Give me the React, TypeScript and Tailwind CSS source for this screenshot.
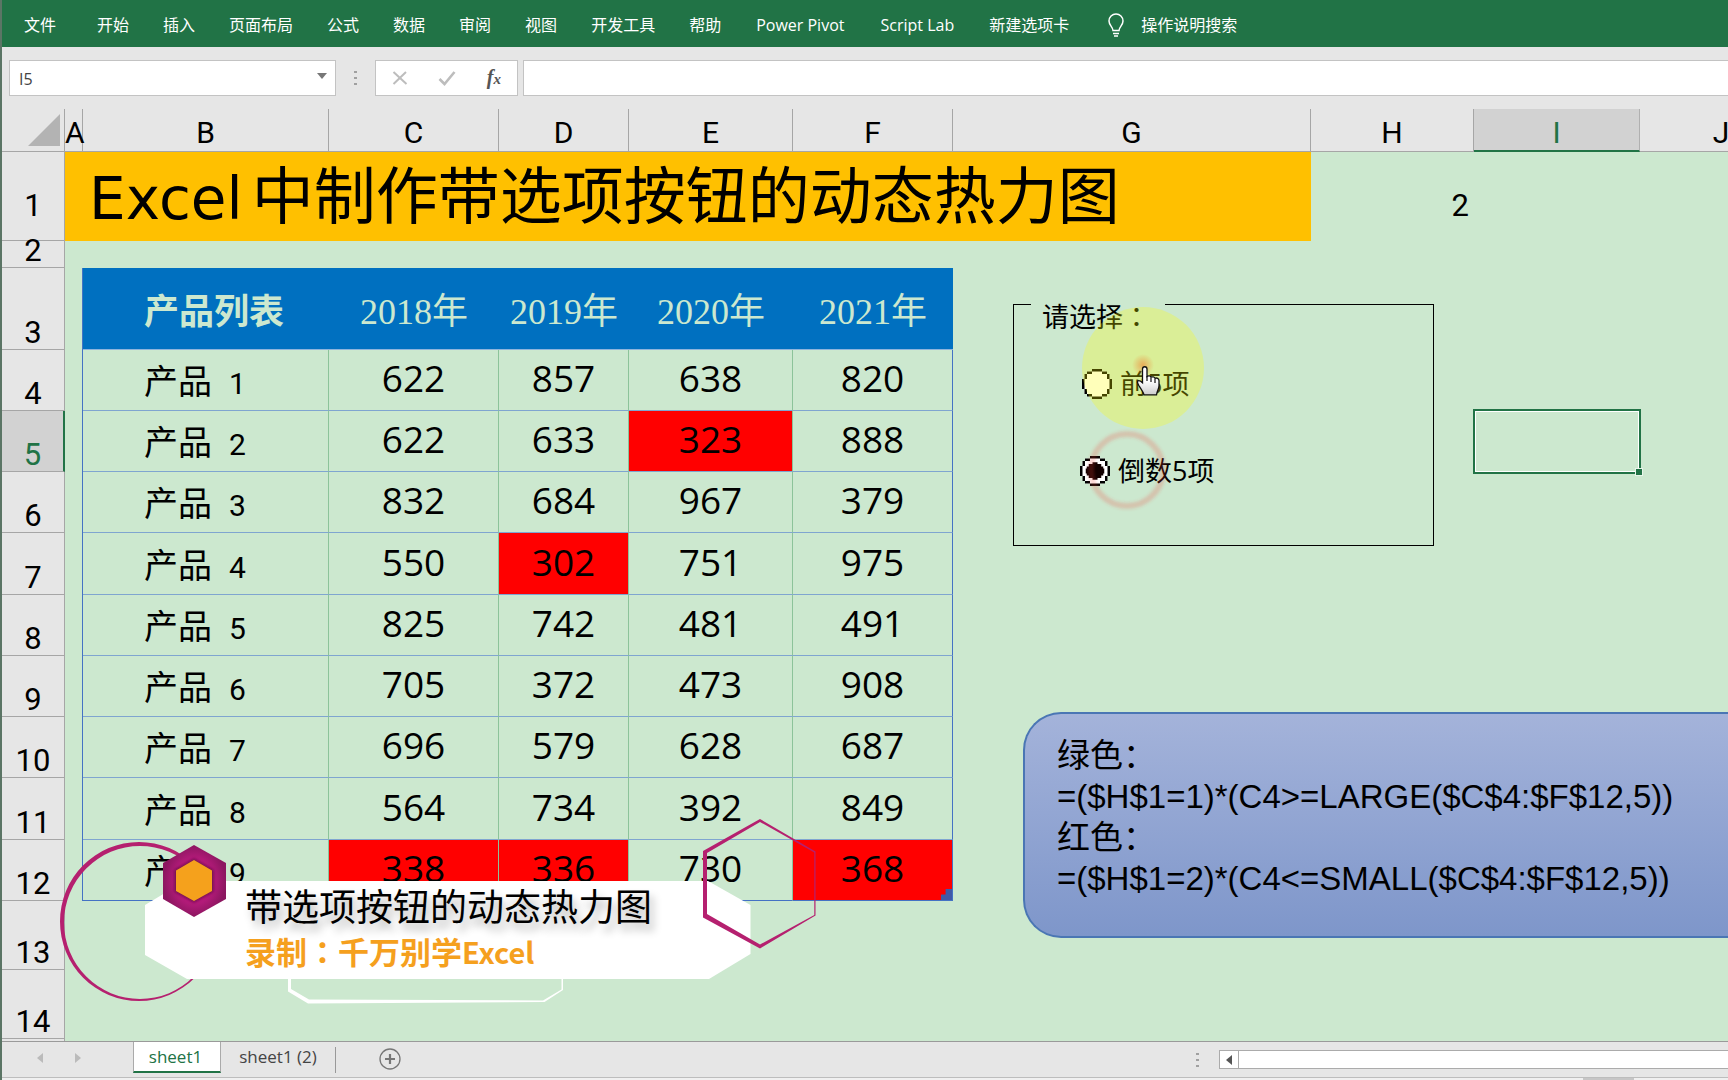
import { useState } from "react"
import clsx from "clsx"

const MENU = ["开始", "插入", "页面布局", "公式", "数据", "审阅", "视图", "开发工具", "帮助", "Power Pivot", "Script Lab", "新建选项卡"]

const COLUMNS = [
  { name: "A", width: "w-[18px]" },
  { name: "B", width: "w-[246px]" },
  { name: "C", width: "w-[170px]" },
  { name: "D", width: "w-[130px]" },
  { name: "E", width: "w-[164px]" },
  { name: "F", width: "w-[160px]" },
  { name: "G", width: "w-[358px]" },
  { name: "H", width: "w-[163px]" },
  { name: "I", width: "w-[166px]" },
  { name: "J", width: "" },
]

const YEARS = ["2018年", "2019年", "2020年", "2021年"]

const PRODUCTS = [
  [622, 857, 638, 820],
  [622, 633, 323, 888],
  [832, 684, 967, 379],
  [550, 302, 751, 975],
  [825, 742, 481, 491],
  [705, 372, 473, 908],
  [696, 579, 628, 687],
  [564, 734, 392, 849],
  [338, 336, 730, 368],
]

const LAST = PRODUCTS.length - 1
const SORTED = PRODUCTS.flat().sort((a, b) => a - b)
const SMALL_5 = SORTED[4]
const LARGE_5 = SORTED[SORTED.length - 5]

const RowHeader = ({ row, active = false, className = "pb-[6px]" }) => (
  <th
    scope="row"
    className={clsx(
      "border-b border-[#a6a6a6] text-center align-bottom font-['Roboto'] text-[31px] leading-[20px] font-normal",
      active ? "border-r-2 border-r-[#217346] bg-[#d2d2d2] text-[#217346]" : "border-r bg-[#e6e6e6] text-black",
      className
    )}
  >
    {row}
  </th>
)

const Ribbon = () => (
  <header className="flex h-[47px] items-center bg-[#217346] pt-[2px] text-[16px] whitespace-nowrap text-white">
    <nav className="flex items-center gap-[34px] pl-[22px]">
      <a href="#file" className="mr-[7px]">文件</a>
      {MENU.map((item) => (
        <a key={item} href="#tab" className={clsx(item.includes(" ") && "px-[1px]")}>{item}</a>
      ))}
    </nav>
    <button className="ml-[38px] flex items-center gap-[16px]">
      <svg viewBox="0 0 18 24" className="h-[24px] w-[18px]" fill="none" stroke="currentColor" strokeWidth="1.5">
        <path d="M6 17.5c0-3.5-4-5-4-9.5a7 7 0 0 1 14 0c0 4.500-4 6-4 9.500z" />
        <path d="M6 20.500h6M7 23h4" />
      </svg>
      操作说明搜索
    </button>
  </header>
)

const FormulaBar = () => (
  <div className="flex h-[62px] gap-[5px] pt-[13px] pl-[7px]">
    <div className="flex h-[36px] w-[327px] items-center border border-[#c3c3c3] bg-white pr-[8px]">
      <input
        aria-label="名称框"
        defaultValue="I5"
        className="min-w-0 flex-1 bg-transparent pt-[1px] pl-[9px] text-[16px] text-[#444] outline-none"
      />
      <svg viewBox="0 0 10 6" className="mb-[4px] h-[6px] w-[10px] fill-[#777]">
        <path d="M0 0h10L5 6z" />
      </svg>
    </div>
    <div className="flex h-[36px] w-[29px] items-center justify-center">
      <svg viewBox="0 0 4 16" className="h-[16px] w-[4px] fill-[#a0a0a0]">
        <path d="M0 1h3v2H0zM0 7h3v2H0zM0 13h3v2H0z" />
      </svg>
    </div>
    <div className="flex h-[36px] w-[143px] items-center justify-between border border-[#c3c3c3] bg-white pr-[16px] pl-[16px]">
      <button aria-label="取消">
        <svg viewBox="0 0 16 16" className="size-[16px]" fill="none" stroke="#bdbdbd" strokeWidth="2">
          <path d="M1.500 2l13 12M14 2L1.500 14" />
        </svg>
      </button>
      <button aria-label="输入">
        <svg viewBox="0 0 18 16" className="h-[16px] w-[18px]" fill="none" stroke="#bdbdbd" strokeWidth="2.600">
          <path d="M1.500 9l5 5L16.500 2" />
        </svg>
      </button>
      <button aria-label="插入函数" className="pb-[2px] font-['Liberation_Serif'] text-[20px] leading-none font-bold text-[#555] italic">
        f<span className="text-[15px]">x</span>
      </button>
    </div>
    <input aria-label="编辑栏" className="h-[36px] min-w-0 flex-1 border border-r-0 border-[#c3c3c3] bg-white px-2 outline-none" />
  </div>
)

const RadioDot = ({ checked }) => (
  <svg viewBox="0 0 12 12" className="pointer-events-none absolute inset-0 size-[30px]">
    <path fill="#fff" d="M4 0h4v1h2v1h1v2h1v4h-1v2h-1v1H8v1H4v-1H2v-1H1V8H0V4h1V2h1V1h2z" />
    <path
      fill="#000"
      d="M4 0h4v1H4zM2 1h2v1H2zM8 1h2v1H8zM1 2h1v2H1zM10 2h1v2h-1zM0 4h1v4H0zM11 4h1v4h-1zM1 8h1v2H1zM10 8h1v2h-1zM2 10h2v1H2zM8 10h2v1H8zM4 11h4v1H4z"
    />
    {checked && <path fill="#100" d="M5 2.500h2v.7h1.500v1h.8V5h.4v2h-.4v.8h-.8v1H7v.7H5v-.7H3.500v-1h-.8V7h-.4V5h.4v-.8h.8v-1H5z" />}
  </svg>
)

const OptionBox = ({ mode, onChange }) => {
  const options = [
    { value: 1, label: "前5项", className: "ml-[68px]" },
    { value: 2, label: "倒数5项", className: "ml-[66px]" },
  ]

  return (
    <fieldset className="absolute top-[168px] left-[1011px] h-[269px] w-[421px] border border-black">
      <legend className="ml-[17px] w-[134px] px-[11px] pt-[24px] text-[27px] leading-[30px] whitespace-nowrap">
        请选择<span className="font-['Noto_Sans_CJK_TC']">：</span>
      </legend>
      <div className="mt-[32px] flex flex-col gap-[48px]">
        {options.map((option) => (
          <label key={option.value} className={clsx("flex h-[39px] items-center gap-[8px] text-[27px] leading-[39px]", option.className)}>
            <span className="relative size-[30px]">
              <input
                type="radio"
                name="mode"
                className="block size-[30px] appearance-none"
                checked={mode === option.value}
                onChange={() => onChange(option.value)}
              />
              <RadioDot checked={mode === option.value} />
            </span>
            {option.label}
          </label>
        ))}
      </div>
    </fieldset>
  )
}

// Mouse highlight, click ripple and the hand cursor
const Pointer = () => (
  <svg viewBox="0 0 140 220" className="pointer-events-none absolute top-[190px] left-[1071px] h-[220px] w-[140px]">
    <defs>
      <filter id="soft" x="-50%" y="-50%" width="200%" height="200%">
        <feGaussianBlur stdDeviation="1.500" />
      </filter>
      <radialGradient id="click">
        <stop offset="0" stopColor="#f08030" stopOpacity="0.600" />
        <stop offset="1" stopColor="#f08030" stopOpacity="0" />
      </radialGradient>
      <linearGradient id="hand" x1="0" y1="0" x2="0" y2="1">
        <stop offset="0.500" stopColor="#fff" />
        <stop offset="1" stopColor="#ccc" />
      </linearGradient>
    </defs>
    <circle cx="70" cy="69" r="61" fill="#ff0" fillOpacity="0.270" />
    <circle cx="70" cy="66" r="11" fill="url(#click)" />
    <circle cx="54" cy="171" r="36" fill="none" stroke="#f04030" strokeOpacity="0.220" strokeWidth="6" filter="url(#soft)" />
    <path
      d="M69.500 70c0-3 4.500-3 4.500 0v7.500c1.500-1.200 3.500-.6 4 .8 1.500-1 3.500-.4 4 1 1.800-.8 4 .2 4 2.500v5c0 3-2 5-2.500 9H71c-1-3.500-3-5.500-5-9-1-2-2.500-3.500-1-5 1.500-1 3 .5 4.500 2z"
      fill="url(#hand)"
      stroke="#111"
      strokeWidth="1.300"
    />
    <path d="M74 77v5M78 79v4M82 80v4" stroke="#111" strokeWidth="1.200" />
  </svg>
)

const FormulaNote = () => (
  <div className="absolute top-[603px] right-0 left-[1021px] h-[226px] overflow-hidden rounded-l-[38px] border-2 border-r-0 border-[#4a76b4] bg-linear-to-b from-[#a4b3da] to-[#7e96ca] pt-[21px] pl-[32px] font-['Liberation_Sans','Noto_Sans_CJK_SC',sans-serif] text-[33px] leading-[41px] whitespace-nowrap">
    <p>绿色：</p>
    <p>=($H$1=1)*(C4&gt;=LARGE($C$4:$F$12,5))</p>
    <p>红色：</p>
    <p>=($H$1=2)*(C4&lt;=SMALL($C$4:$F$12,5))</p>
  </div>
)

const Banner = () => (
  <div className="absolute top-[701px] left-[48px] h-[200px] w-[780px]">
    <svg viewBox="50 810 780 200" className="absolute inset-0 h-[200px] w-[780px]">
      <defs>
        <radialGradient id="gem">
          <stop offset="0.500" stopColor="#c01c82" />
          <stop offset="1" stopColor="#8c1660" />
        </radialGradient>
        <filter id="gemShadow" x="-30%" y="-30%" width="160%" height="160%">
          <feGaussianBlur stdDeviation="1.800" />
        </filter>
      </defs>
      <path
        fill="#b5206f"
        fillRule="evenodd"
        d="M60 921.500a79 79.500 0 1 0 158 0a79 79.500 0 1 0-158 0zM64 922.500a76 76.500 0 1 0 152 0a76 76.500 0 1 0-152 0z"
      />
      <path fill="#fff" fillRule="evenodd" d="M288 978v13.500l20 12L544.500 1002l18.500-12V978h-1.500v11.500L543 1000.500l-234-1-18-10.500V978z" />
      <path fill="#fff" d="M145 905l40-24h523l42.500 24v49L709 979H187l-42-24z" />
      <path
        fill="#b5206f"
        fillRule="evenodd"
        d="M760 819l55.500 32.500v64L760 948.500l-57-31v-66.500zM760 822l-53 31v61L760 944.500l54.300-29.500v-62.500z"
      />
      <path fill="url(#gem)" d="M194 845l32 18v36l-32 18-31-18v-36z" />
      <path fill="#6d104a" filter="url(#gemShadow)" d="M194 858.500l19.500 11.500v21.500L194 902.500l-19.500-11V870z" />
      <path fill="#f5a11c" d="M194 860l18 10.500v20.500l-18 10-18-10v-20.500z" />
    </svg>
    <div className="relative pt-[74px] pl-[195px] whitespace-nowrap">
      <p className="text-[37px] leading-[46px] [text-shadow:4px_7px_9px_rgba(0,0,0,0.3)]">带选项按钮的动态热力图</p>
      <p className="text-[31px] leading-[41px] font-bold text-[#f5a01e]">
        录制<span className="font-['Noto_Sans_CJK_TC']">：</span>千万别学<span className="font-['Noto_Sans_CJK_SC'] text-[29px]">Excel</span>
      </p>
    </div>
  </div>
)

const SheetTabs = () => (
  <footer className="border-t border-[#9a9a9a]">
    <div className="flex h-[36px] items-start border-b border-[#bdbdbd] text-[17px] leading-[30px] text-[#444]">
      <div className="flex w-[131px] items-center gap-[32px] pt-[11px] pl-[35px]">
        <svg viewBox="0 0 6 10" className="h-[10px] w-[6px] fill-[#bbb]"><path d="M6 0v10L0 5z" /></svg>
        <svg viewBox="0 0 6 10" className="h-[10px] w-[6px] fill-[#bbb]"><path d="M0 0v10l6-5z" /></svg>
      </div>
      <button className="h-[31px] w-[88px] border-x border-b-2 border-x-[#aaa] border-b-[#217346] bg-white pr-[3px] text-[#217346]">sheet1</button>
      <button className="h-[30px] w-[114px] whitespace-nowrap">sheet1 (2)</button>
      <div className="mt-[5px] h-[26px] w-px bg-[#999]" />
      <button aria-label="新工作表" className="mt-[6px] ml-[43px]">
        <svg viewBox="0 0 22 22" className="size-[22px]" fill="none" stroke="#777">
          <circle cx="11" cy="11" r="10" strokeWidth="1.300" />
          <path d="M11 6v10M6 11h10" strokeWidth="2.200" />
        </svg>
      </button>
      <div className="ml-auto flex w-[532px] items-center pt-[8px]">
        <svg viewBox="0 0 4 16" className="mr-[19px] h-[16px] w-[4px] fill-[#a0a0a0]">
          <path d="M0 1h3v2H0zM0 7h3v2H0zM0 13h3v2H0z" />
        </svg>
        <button aria-label="向左滚动" className="flex h-[19px] w-[20px] items-center justify-center border border-[#ababab] bg-white">
          <svg viewBox="0 0 6 10" className="h-[10px] w-[6px] fill-[#555]"><path d="M6 0v10L0 5z" /></svg>
        </button>
        <div className="h-[19px] flex-1 border-y border-[#ababab] bg-white" />
      </div>
    </div>
    <div className="flex h-[2px] justify-end bg-[#f0f0f0] pr-[94px]">
      <div className="w-[51px] bg-[#c6c6c6]" />
    </div>
  </footer>
)

export default function App() {
  const [mode, setMode] = useState(2)

  const heat = (value) => {
    if (mode === 1 && value >= LARGE_5) return "bg-[#00b050]"
    if (mode === 2 && value <= SMALL_5) return "bg-[#ff0000]"
    return ""
  }

  return (
    <div className="overflow-hidden border-l-2 border-[#5b7565] bg-[#e6e6e6] font-['Open_Sans','Noto_Sans_CJK_SC',sans-serif] text-black">
      <Ribbon />
      <FormulaBar />

      <main className="relative overflow-hidden bg-[#cce8cf]">
        <table className="w-full min-w-[1801px] table-fixed border-separate border-spacing-0">
          <colgroup>
            <col className="w-[63px]" />
            {COLUMNS.map((col) => (
              <col key={col.name} className={col.width} />
            ))}
          </colgroup>
          <thead>
            <tr className="h-[43px] bg-[#e6e6e6] font-['Roboto'] text-[30px] leading-[34px]">
              <td className="border-r border-b border-[#a6a6a6] p-0 align-bottom">
                <svg viewBox="0 0 32 32" className="mr-[4px] mb-[5px] ml-auto size-[32px] fill-[#b3b3b3]"><path d="M32 0v32H0z" /></svg>
              </td>
              {COLUMNS.map((col) => (
                <th
                  key={col.name}
                  scope="col"
                  className={clsx(
                    "border-r p-0 pt-[6px] font-normal",
                    col.name === "I" ? "border-b-2 border-r-[#b0b0b0] border-b-[#217346] bg-[#d2d2d2] text-[#217346]" : "border-b border-[#a6a6a6]"
                  )}
                >
                  {col.name}
                </th>
              ))}
            </tr>
          </thead>
          <tbody>
            <tr className="h-[89px]">
              <RowHeader row={1} className="pb-[24px]" />
              <td colSpan={7} className="bg-[#ffc000] p-0 pl-[24px] text-[62px] leading-[70px] whitespace-nowrap">
                <span className="mr-[9px] font-['DejaVu_Sans'] text-[58px]">Excel</span>中制作带选项按钮的动态热力图
              </td>
              <td className="p-0 pr-[5px] pb-[25px] text-right align-bottom font-['Roboto'] text-[31px] leading-[20px]">{mode}</td>
              <td colSpan={2} />
            </tr>
            <tr className="h-[27px]">
              <RowHeader row={2} />
              <td colSpan={10} />
            </tr>
            <tr className="h-[82px]">
              <RowHeader row={3} />
              <td className="border-r border-[#4472c4]" />
              <th scope="col" className="border-b border-[#8eb4dc] bg-[#0070c0] p-0 pt-[4px] pl-[61px] text-left text-[35px] leading-[40px] text-[#cce8cf]">
                产品列表
              </th>
              {YEARS.map((year) => (
                <th
                  key={year}
                  scope="col"
                  className="border-b border-[#8eb4dc] bg-[#0070c0] p-0 pt-[7px] font-['Liberation_Serif','Noto_Sans_CJK_SC',serif] text-[36px] leading-[40px] font-normal text-[#cce8cf]"
                >
                  {year}
                </th>
              ))}
              <td colSpan={4} />
            </tr>
            {PRODUCTS.map((values, i) => (
              <tr key={i} className={i === 3 || i === 7 ? "h-[62px]" : "h-[61px]"}>
                <RowHeader row={i + 4} active={i === 1} />
                <td className="border-r border-[#4472c4]" />
                <td
                  className={clsx(
                    "border-r border-b border-r-[#8cc39a] p-0 pt-[5px] pl-[61px] text-[34px] leading-[40px]",
                    i === LAST ? "border-b-[#4472c4]" : "border-b-[#7fa5d0]"
                  )}
                >
                  产品&ensp;<span className="font-['Roboto'] text-[30px]">{i + 1}</span>
                </td>
                {values.map((value, j) => (
                  <td
                    key={j}
                    className={clsx(
                      "relative border-r border-b p-0 pb-[4px] text-center text-[37px] leading-[40px]",
                      i === LAST ? "border-b-[#4472c4]" : "border-b-[#7fa5d0]",
                      j === 3 ? "border-r-[#4472c4]" : "border-r-[#8cc39a]",
                      heat(value)
                    )}
                  >
                    {value}
                    {i === LAST && j === 3 && (
                      <svg viewBox="0 0 12 12" className="absolute right-0 bottom-0 size-[11px] fill-[#4159a8]">
                        <path d="M12 0v12H0V6h5V0z" />
                      </svg>
                    )}
                  </td>
                ))}
                <td colSpan={2} />
                <td className="relative p-0">
                  {i === 1 && (
                    <div className="absolute -inset-x-[1px] -inset-y-[2px] border-2 border-[#217346] outline-1 -outline-offset-3 outline-white">
                      <div className="absolute -right-[4px] -bottom-[4px] size-[8px] border border-[#e8f5ea] bg-[#217346]" />
                    </div>
                  )}
                </td>
                <td />
              </tr>
            ))}
            {[13, 14].map((row) => (
              <tr key={row} className="h-[69px]">
                <RowHeader row={row} />
                <td colSpan={10} />
              </tr>
            ))}
            <tr className="h-[2px]">
              <td className="border-r border-[#a6a6a6] bg-[#e6e6e6] p-0" />
              <td colSpan={10} className="p-0" />
            </tr>
          </tbody>
        </table>

        <OptionBox mode={mode} onChange={setMode} />
        <Pointer />
        <FormulaNote />
        <Banner />
      </main>

      <SheetTabs />
    </div>
  )
}
